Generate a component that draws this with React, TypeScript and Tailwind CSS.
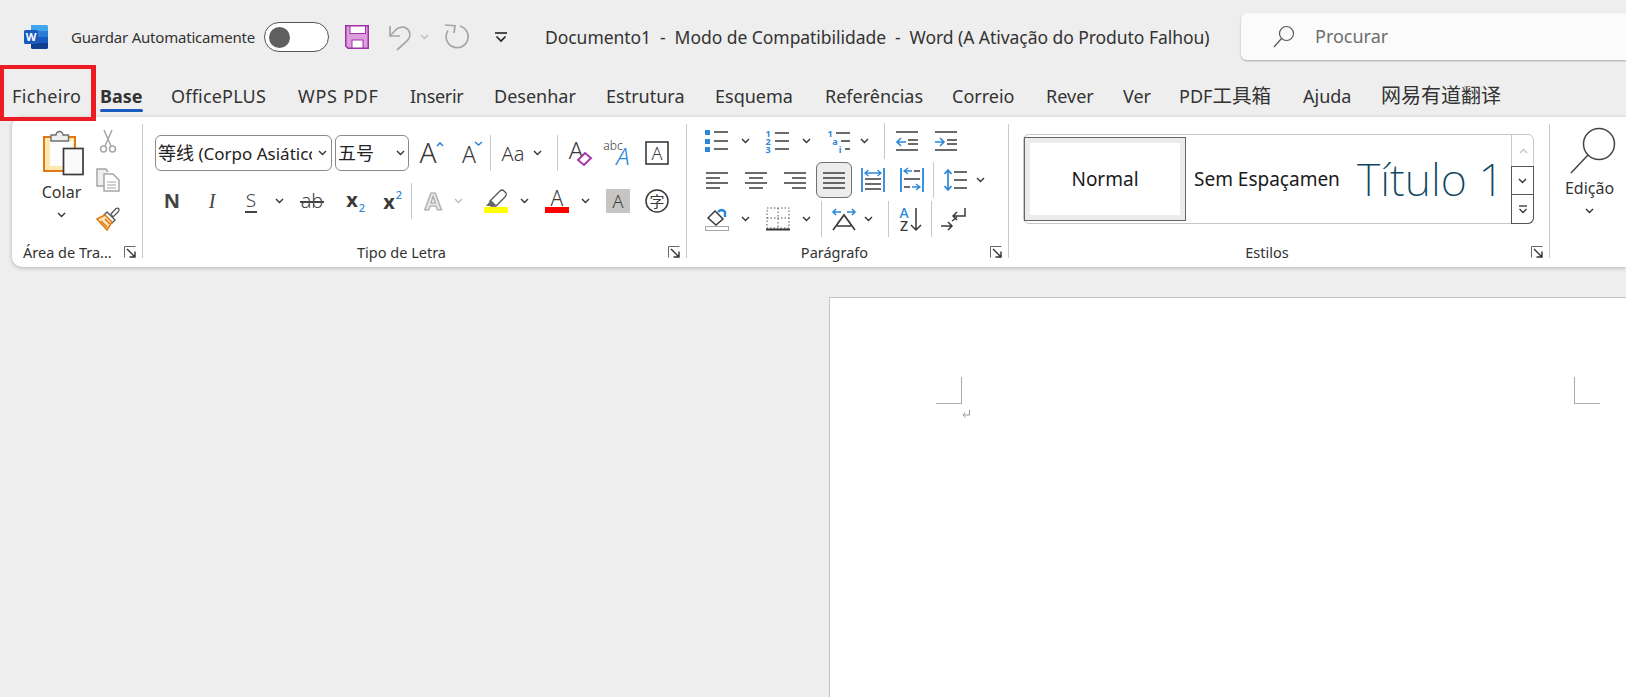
import React from "react";

const FONT = "font-['Noto_Sans','Open_Sans','Noto_Sans_CJK_SC',sans-serif]";
const D = "#3a3a3a";
const B = "#2b88d8";
const G = "#a6a6a6";

type P = { className?: string };

const Svg = ({ w = 24, h = 24, className = "", children }: { w?: number; h?: number; className?: string; children: React.ReactNode }) => (
  <svg width={w} height={h} viewBox={`0 0 ${w} ${h}`} fill="none" className={`shrink-0 block overflow-visible ${className}`}>
    {children}
  </svg>
);

const Chev = ({ className = "", c = "#333" }: P & { c?: string }) => (
  <Svg w={9} h={6} className={className}>
    <path d="M1 1 L4.5 4.5 L8 1" stroke={c} strokeWidth="1.4" />
  </Svg>
);

const Sep = ({ className = "" }: P) => <div className={`w-px h-[36px] bg-[#c8c8c8] shrink-0 ${className}`} />;

const Launcher = () => (
  <Svg w={12} h={12} className="mr-[6px] mt-[4px]">
    <path d="M0.5 11.5 V0.5 H11.5" stroke="#666" strokeWidth="1" />
    <path d="M3 3 L11 11 M5.5 11 H11 V5.5" stroke="#333" strokeWidth="1.4" />
  </Svg>
);

const Lines = ({ rows }: { rows: [number, number, number][] }) => (
  <>
    {rows.map(([x1, x2, y], i) => (
      <path key={i} d={`M${x1} ${y}H${x2}`} stroke={D} strokeWidth="1.5" />
    ))}
  </>
);

const GText = ({ x, y, s, fill = D, children, weight = 300 }: { x: number; y: number; s: number; fill?: string; children: React.ReactNode; weight?: number }) => (
  <text x={x} y={y} fontSize={s} fill={fill} fontWeight={weight} textAnchor="middle" fontFamily="'Noto Sans','Open Sans',sans-serif">
    {children}
  </text>
);

const Tab = ({ className, children, active }: { className: string; children: React.ReactNode; active?: boolean }) => (
  <div className={`relative whitespace-nowrap shrink-0 ${className} ${active ? "font-bold" : ""}`}>
    {children}
    {active && <div className="absolute left-0 right-0 top-[26px] h-[3px] bg-[#185abd] rounded-sm" />}
  </div>
);

export default function App() {
  return (
    <div className={`relative w-[1626px] h-[697px] overflow-hidden bg-[#eeeeee] text-[#333333] ${FONT}`}>
      {/* title bar */}
      <div className="h-[74px] flex items-center">
        <Svg w={24} h={24} className="ml-[24px]">
          <path d="M7 0H22.5A1.5 1.5 0 0 1 24 1.5V6H7Z" fill="#41a5ee" />
          <rect x="7" y="6" width="17" height="6" fill="#2b7cd3" />
          <rect x="7" y="12" width="17" height="6" fill="#185abd" />
          <path d="M7 18H24V22.5A1.5 1.5 0 0 1 22.5 24H8.5A1.5 1.5 0 0 1 7 22.5Z" fill="#103f91" />
          <rect x="0" y="5" width="14" height="14" rx="1.5" fill="#185abd" />
          <text x="7" y="16" textAnchor="middle" fontSize="11" fontWeight="700" fill="#fff" fontFamily="'Noto Sans',sans-serif">W</text>
        </Svg>
        <div className="ml-[23px] w-[187px] text-[15px] tracking-[-0.2px] whitespace-nowrap">Guardar Automaticamente</div>
        <div className="ml-[6px] w-[65px] h-[30px] rounded-full border border-[#555] bg-white flex items-center pl-[4px] shrink-0">
          <div className="w-[21px] h-[21px] rounded-full bg-[#5f5f5f]" />
        </div>
        <Svg w={24} h={24} className="ml-[16px]">
          <path d="M0.75 0.75H23.25V23.25H3L0.75 21Z" fill="#dc9fdc" stroke="#a030a8" strokeWidth="1.5" />
          <rect x="5" y="1" width="15.5" height="7.5" fill="#fff" stroke="#a030a8" strokeWidth="1" />
          <rect x="7" y="15" width="11" height="8" fill="#fff" stroke="#a030a8" strokeWidth="1" />
        </Svg>
        <Svg w={22} h={25} className="ml-[20px]">
          <path d="M1 1V11H11" stroke={G} strokeWidth="1.7" />
          <path d="M1.5 10.5 L7 4.5 C11 1 17 1 20 6 C22 10 20 14 18 16 L8 25" stroke={G} strokeWidth="1.7" />
        </Svg>
        <Chev className="ml-[9px]" c="#bdbdbd" />
        <Svg w={26} h={26} className="ml-[15px]">
          <path d="M1 1 L11 1.7 L10 9" stroke={G} strokeWidth="1.7" />
          <path d="M16 2 A11 11 0 1 1 4 6.5" stroke={G} strokeWidth="1.7" />
        </Svg>
        <Svg w={12} h={11} className="ml-[25px]">
          <path d="M0 1H12" stroke="#222" strokeWidth="1.6" />
          <path d="M1.5 4.5 L6 9 L10.5 4.5" stroke="#222" strokeWidth="1.6" />
        </Svg>
        <div className="ml-[38px] w-[663px] shrink-0 text-[17.5px] tracking-[-0.05px] whitespace-pre">Documento1  -  Modo de Compatibilidade  -  Word (A Ativação do Produto Falhou)</div>
        <div className="ml-[33px] flex-1 h-[47px] mt-[-1px] rounded-l-[6px] bg-[#fbfbfb] shadow-[0_1px_2px_rgba(0,0,0,0.3)] flex items-center">
          <Svg w={22} h={24} className="ml-[32px]">
            <circle cx="13.5" cy="8.5" r="7" stroke="#555" strokeWidth="1.2" />
            <path d="M8.5 13.5 L1 22" stroke="#555" strokeWidth="1.2" />
          </Svg>
          <div className="ml-[20px] text-[18px] text-[#6e6e6e]">Procurar</div>
        </div>
      </div>

      {/* tabs */}
      <div className="h-[43px] flex items-start pt-[9px] text-[18px] leading-[26px] text-[#333333]">
        <Tab className="ml-[12px] w-[68px] tracking-[0.35px]">Ficheiro</Tab>
        <Tab className="ml-[20px] w-[43px]" active>Base</Tab>
        <Tab className="ml-[28px] w-[95px] tracking-[0.2px]">OfficePLUS</Tab>
        <Tab className="ml-[32px] w-[81px] tracking-[0.7px]">WPS PDF</Tab>
        <Tab className="ml-[31px] w-[53px] tracking-[-0.3px]">Inserir</Tab>
        <Tab className="ml-[31px] w-[81px]">Desenhar</Tab>
        <Tab className="ml-[31px] w-[78px]">Estrutura</Tab>
        <Tab className="ml-[31px] w-[78px]">Esquema</Tab>
        <Tab className="ml-[32px] w-[97px]">Referências</Tab>
        <Tab className="ml-[30px] w-[64px]">Correio</Tab>
        <Tab className="ml-[30px] w-[50px]">Rever</Tab>
        <Tab className="ml-[27px] w-[27px]">Ver</Tab>
        <Tab className="ml-[29px] w-[93px]">PDF<span className="text-[19.5px]">工具箱</span></Tab>
        <Tab className="ml-[31px] w-[50px]">Ajuda</Tab>
        <Tab className="ml-[28px] w-[120px] text-[20px]">网易有道翻译</Tab>
      </div>

      {/* ribbon */}
      <div className="ml-[12px] h-[150px] rounded-l-[10px] bg-white shadow-[0_1px_4px_rgba(0,0,0,0.25)] flex items-start pt-[7px]">
        {/* clipboard */}
        <div className="w-[131px] h-[134px] border-r border-[#c8c8c8] flex flex-col shrink-0">
          <div className="h-[118px] shrink-0 flex">
            <div className="ml-[27px] w-[45px] flex flex-col items-center">
              <Svg w={41} h={46} className="mt-[5px] self-end">
                <rect x="1" y="8" width="31" height="34" fill="#fde9b0" stroke="#e07b12" strokeWidth="2" />
                <rect x="7" y="12" width="23" height="25" fill="#fdfdfd" />
                <path d="M8 12V6H13A3.5 3.5 0 0 1 20 6H25.5V12Z" fill="#efefef" stroke="#707070" strokeWidth="1.4" />
                <rect x="20.5" y="19.5" width="19.5" height="26" fill="#fafafa" stroke={D} strokeWidth="1.7" />
              </Svg>
              <div className="mt-[6px] text-[16px] leading-[22px]">Colar</div>
              <Chev className="mt-[9px]" />
            </div>
            <div className="ml-[12px] flex flex-col gap-[15px] mt-[5px]">
              <Svg>
                <path d="M8 1 L15 17 M16 1 L9 17" stroke={G} strokeWidth="1.5" />
                <circle cx="7.5" cy="20" r="3" stroke={G} strokeWidth="1.5" />
                <circle cx="16.5" cy="20" r="3" stroke={G} strokeWidth="1.5" />
              </Svg>
              <Svg>
                <path d="M8 18H1V1H10L12 4" fill="#eee" stroke={G} strokeWidth="1.5" />
                <path d="M8 6H17L23 12V23H8Z" fill="#fff" stroke={G} strokeWidth="1.5" />
                <path d="M11 14H20M11 17H20M11 20H20" stroke={G} strokeWidth="1" />
              </Svg>
              <Svg>
                <path d="M15 7 L20 1.5 Q22 0.5 23 2 Q23.5 3.5 22 5 L17 10 Z" fill="#fff" stroke="#555" strokeWidth="1.3" />
                <path d="M11 5 L19 13 L16 16 L8 8Z" fill="#fff" stroke="#555" strokeWidth="1.3" />
                <path d="M9 8 L1 12 L11 23 L16 15 Z" fill="#fbe3bd" stroke="#e07b12" strokeWidth="1.6" />
                <path d="M5 14 L11 20 M9 12 L14 17" stroke="#e07b12" strokeWidth="1.6" />
              </Svg>
            </div>
          </div>
          <div className="h-[20px] shrink-0 flex">
            <div className="ml-[11px] flex-1 text-[14.5px] leading-[20px] whitespace-nowrap">Área de Tra...</div>
            <Launcher />
          </div>
        </div>

        {/* font */}
        <div className="w-[544px] h-[134px] border-r border-[#c8c8c8] flex flex-col shrink-0">
          <div className="h-[118px] shrink-0">
            <div className="flex items-center mt-[11px] h-[36px]">
              <div className="ml-[12px] w-[177px] h-[36px] rounded-[6px] border border-[#8a8a8a] flex items-center pl-[2px] shrink-0">
                <div className="w-[154px] overflow-hidden whitespace-nowrap text-[17px] text-[#222]"><span className="text-[18px]">等线</span> (Corpo Asiático)</div>
                <Chev className="ml-[6px]" />
              </div>
              <div className="ml-[3px] w-[74px] h-[36px] rounded-[6px] border border-[#8a8a8a] flex items-center pl-[2px] shrink-0">
                <div className="w-[58px] whitespace-nowrap text-[18px] text-[#222]">五号</div>
                <Chev />
              </div>
              <Svg className="ml-[10px]">
                <GText x={9} y={22} s={28}>A</GText>
                <path d="M18 5 L21 2 L24 5" stroke={B} strokeWidth="1.6" />
              </Svg>
              <Svg w={21} className="ml-[18px]">
                <GText x={8} y={22} s={23}>A</GText>
                <path d="M14 1 L17.5 4 L21 1" stroke={B} strokeWidth="1.6" />
              </Svg>
              <Sep className="ml-[8px]" />
              <Svg className="ml-[10px]">
                <GText x={12} y={20} s={20}>Aa</GText>
              </Svg>
              <Chev className="ml-[8px]" />
              <Sep className="ml-[15px]" />
              <Svg className="ml-[9px]">
                <GText x={9} y={18} s={24}>A</GText>
                <path d="M11 19 L18 12 L24 17 L17 24 Z" fill="#fff" stroke="#a33aa8" strokeWidth="2" />
              </Svg>
              <Svg w={25} className="ml-[14px]">
                <GText x={8} y={9} s={12}>abc</GText>
                <text x={18} y={24} fontSize={24} fill={B} fontStyle="italic" fontWeight={300} textAnchor="middle" fontFamily="'Noto Sans',sans-serif">A</text>
              </Svg>
              <Svg className="ml-[15px]">
                <rect x="1" y="1" width="22" height="22" stroke={D} strokeWidth="1.6" />
                <GText x={12} y={19} s={18}>A</GText>
              </Svg>
            </div>
            <div className="flex items-center mt-[12px] h-[36px]">
              <div className="ml-[17px] w-[24px] text-center text-[20px] font-bold text-[#444] shrink-0 leading-[24px]">N</div>
              <div className="ml-[16px] w-[24px] text-center text-[20px] italic text-[#444] shrink-0 leading-[24px] font-['Liberation_Serif',serif]">I</div>
              <div className="ml-[15px] w-[24px] flex flex-col items-center shrink-0">
                <div className="text-[19px] font-light text-[#444] leading-[22px]">S</div>
                <div className="w-[12px] h-[1.5px] bg-[#444]" />
              </div>
              <Chev className="ml-[12px]" />
              <div className="relative ml-[16px] w-[24px] text-center text-[20px] font-light text-[#444] shrink-0 leading-[24px]">
                ab
                <div className="absolute left-0 right-0 top-[12px] h-[1.5px] bg-[#444]" />
              </div>
              <Svg className="ml-[19px]">
                <GText x={9} y={18} s={20} weight={700}>x</GText>
                <GText x={19} y={23} s={11} fill={B} weight={500}>2</GText>
              </Svg>
              <Svg className="ml-[13px]">
                <GText x={9} y={20} s={20} weight={700}>x</GText>
                <GText x={19} y={10} s={11} fill={B} weight={500}>2</GText>
              </Svg>
              <Sep className="ml-[7px]" />
              <Svg className="ml-[9px]">
                <text x={12} y={21} fontSize={24} fontWeight={700} fill="#e8e8e8" stroke="#aaaaaa" strokeWidth="1.2" textAnchor="middle" fontFamily="'Noto Sans',sans-serif">A</text>
              </Svg>
              <Chev className="ml-[9px]" c="#bdbdbd" />
              <Svg className="ml-[21px]">
                <path d="M6 12 L16 2 Q18 0 20 2 L22 4 Q23 6 21 8 L12 17 H7 Z" fill="#fff" stroke="#555" strokeWidth="1.3" />
                <path d="M2 17 L7 11 L12 16 L10 17Z" fill="#666" />
                <rect x="0" y="18" width="24" height="6" fill="#ffff00" />
              </Svg>
              <Chev className="ml-[12px]" />
              <Svg className="ml-[16px]">
                <GText x={12} y={17} s={21}>A</GText>
                <rect x="0" y="18" width="24" height="6" fill="#ff0000" />
              </Svg>
              <Chev className="ml-[12px]" />
              <Svg className="ml-[16px]">
                <rect width="24" height="24" fill="#c6c5c3" />
                <GText x={12} y={19} s={18}>A</GText>
              </Svg>
              <Svg className="ml-[15px]">
                <circle cx="12" cy="12" r="11" stroke={D} strokeWidth="1.5" />
                <text x={12} y={18} fontSize={15} fill={D} textAnchor="middle" fontFamily="'Noto Sans CJK SC',sans-serif">字</text>
              </Svg>
            </div>
          </div>
          <div className="h-[20px] shrink-0 flex">
            <div className="flex-1 pr-[8px] text-center text-[14.5px] leading-[20px]">Tipo de Letra</div>
            <Launcher />
          </div>
        </div>

        {/* paragraph */}
        <div className="w-[322px] h-[134px] border-r border-[#c8c8c8] flex flex-col shrink-0">
          <div className="h-[118px] shrink-0 mt-[-1px] mb-[1px] flex flex-col gap-[3px]">
            <div className="flex items-center h-[36px]">
              <Svg className="ml-[18px]">
                {[3, 12, 20].map((y) => <rect key={y} x="0" y={y - 2} width="5" height="5" fill={B} />)}
                <Lines rows={[[9, 23, 3], [9, 23, 12], [9, 23, 20]]} />
              </Svg>
              <Chev className="ml-[12px]" />
              <Svg className="ml-[15px]">
                <text x={3} y={8} fontSize={9} fontWeight={700} fill={B} textAnchor="middle">1</text>
                <text x={3} y={16} fontSize={9} fontWeight={700} fill={B} textAnchor="middle">2</text>
                <text x={3} y={24} fontSize={9} fontWeight={700} fill={B} textAnchor="middle">3</text>
                <Lines rows={[[10, 24, 4], [10, 24, 12], [10, 24, 20]]} />
              </Svg>
              <Chev className="ml-[13px]" />
              <Svg className="ml-[16px]">
                <text x={3} y={8} fontSize={9} fontWeight={700} fill={B} textAnchor="middle">1</text>
                <text x={8} y={16} fontSize={9} fontWeight={700} fill={B} textAnchor="middle">a</text>
                <text x={13} y={24} fontSize={9} fontWeight={700} fill={B} textAnchor="middle">i</text>
                <Lines rows={[[9, 23, 4], [14, 23, 12], [18, 23, 20]]} />
              </Svg>
              <Chev className="ml-[9px]" />
              <Sep className="ml-[15px]" />
              <Svg className="ml-[10px]">
                <Lines rows={[[1, 23, 3], [13, 23, 11], [13, 23, 15], [1, 23, 21]]} />
                <path d="M11 13H2 M6 9 L2 13 L6 17" stroke={B} strokeWidth="1.6" />
              </Svg>
              <Svg className="ml-[15px]">
                <Lines rows={[[1, 23, 3], [13, 23, 11], [13, 23, 15], [1, 23, 21]]} />
                <path d="M1 13H10 M6 9 L10 13 L6 17" stroke={B} strokeWidth="1.6" />
              </Svg>
            </div>
            <div className="flex items-center h-[36px]">
              <Svg className="ml-[18px]">
                <Lines rows={[[1, 23, 5], [1, 15, 10], [1, 23, 15], [1, 15, 20]]} />
              </Svg>
              <Svg className="ml-[15px]">
                <Lines rows={[[1, 23, 5], [5, 19, 10], [1, 23, 15], [5, 19, 20]]} />
              </Svg>
              <Svg className="ml-[15px]">
                <Lines rows={[[1, 23, 5], [9, 23, 10], [1, 23, 15], [9, 23, 20]]} />
              </Svg>
              <div className="ml-[9px] w-[36px] h-[36px] rounded-[6px] bg-[#ececec] border border-[#707070] flex items-center justify-center shrink-0">
                <Svg>
                  <Lines rows={[[1, 23, 5], [1, 23, 10], [1, 23, 15], [1, 23, 20]]} />
                </Svg>
              </div>
              <Svg className="ml-[9px]">
                <path d="M1 0V24 M23 0V24" stroke={B} strokeWidth="1.8" />
                <path d="M4 5H20 M7.5 2 L4 5 L7.5 8 M16.5 2 L20 5 L16.5 8" stroke={B} strokeWidth="1.3" />
                <Lines rows={[[4, 20, 11], [4, 20, 16], [4, 20, 21]]} />
              </Svg>
              <Svg className="ml-[15px]">
                <path d="M1 0V24 M23 0V24" stroke={B} strokeWidth="1.8" />
                <path d="M5 3H12 M8 0 L4 3 L8 6 M12 19H19 M16 16 L20 19 L16 22" stroke={B} strokeWidth="1.3" />
                <Lines rows={[[14, 20, 3], [4, 20, 11], [4, 10, 19]]} />
              </Svg>
              <Sep className="ml-[9px]" />
              <Svg className="ml-[9px]">
                <path d="M5 2V22 M1.5 6 L5 2 L8.5 6 M1.5 18 L5 22 L8.5 18" stroke={B} strokeWidth="1.7" />
                <Lines rows={[[11, 24, 4], [11, 24, 12], [11, 24, 20]]} />
              </Svg>
              <Chev className="ml-[9px]" />
            </div>
            <div className="flex items-center h-[36px]">
              <Svg className="ml-[18px]">
                <path d="M3 11 L10 4 L18 12 L11 18 Z" fill="#fff" stroke={D} strokeWidth="1.5" />
                <path d="M13 5 Q17 1 20 5 L20 10" stroke={B} strokeWidth="2.4" />
                <rect x="0.5" y="19.5" width="23" height="4" fill="#fff" stroke={G} />
              </Svg>
              <Chev className="ml-[12px]" />
              <Svg className="ml-[16px]">
                <rect x="1" y="1" width="22" height="20" stroke="#555" strokeDasharray="1.5 2" />
                <path d="M12 1V21 M1 11H23" stroke="#555" strokeDasharray="1.5 2" />
                <path d="M0 22.5H24" stroke="#333" strokeWidth="2" />
              </Svg>
              <Chev className="ml-[12px]" />
              <Sep className="ml-[10px]" />
              <Svg className="ml-[10px]">
                <path d="M1 5H9 M4 2 L1 5 L4 8 M15 5H23 M20 2 L23 5 L20 8" stroke={B} strokeWidth="1.5" />
                <path d="M1 23 L12 8 L23 23 M5 19H19" stroke={D} strokeWidth="1.7" />
              </Svg>
              <Chev className="ml-[8px]" />
              <Sep className="ml-[15px]" />
              <Svg className="ml-[9px]">
                <GText x={6} y={11} s={14} fill={B} weight={500}>A</GText>
                <GText x={6} y={24} s={14} weight={500}>Z</GText>
                <path d="M18 1V23 M13 18 L18 23 L23 18" stroke={D} strokeWidth="1.5" />
              </Svg>
              <Sep className="ml-[9px]" />
              <Svg className="ml-[9px]">
                <path d="M0 19H11 M7 15 L11 19 L7 23 M24 1V9H12 M16 5 L12 9 L16 13" stroke={D} strokeWidth="1.5" />
                <path d="M11 14 L16 10" stroke={D} strokeWidth="1.5" />
              </Svg>
            </div>
          </div>
          <div className="h-[20px] shrink-0 flex">
            <div className="flex-1 pr-[8px] text-center text-[14.5px] leading-[20px]">Parágrafo</div>
            <Launcher />
          </div>
        </div>

        {/* styles */}
        <div className="w-[541px] h-[134px] border-r border-[#c8c8c8] flex flex-col shrink-0">
          <div className="h-[118px] shrink-0">
            <div className="ml-[14px] mt-[10px] w-[511px] h-[90px] rounded-[6px] border border-[#c8c8c8] flex items-start">
              <div className="mt-[2px] w-[162px] h-[84px] border border-[#666] shrink-0">
                <div className="w-full h-full border-[5px] border-[#ececec] flex items-center justify-center text-[19px] text-[#1a1a1a]">Normal</div>
              </div>
              <div className="ml-[8px] w-[145px] h-[84px] mt-[2px] overflow-hidden whitespace-nowrap flex items-center text-[19px] text-[#1a1a1a] shrink-0">Sem Espaçamento</div>
              <div className="ml-[18px] w-[145px] h-[84px] mt-[2px] whitespace-nowrap flex items-center text-[45px] font-extralight text-[#0f4761] shrink-0">Título 1</div>
              <div className="ml-[9px] w-[23px] h-[89px] shrink-0 flex flex-col">
                <div className="h-[31px] border-l border-[#c8c8c8] flex items-center justify-center"><Svg w={9} h={6}><path d="M1 5 L4.5 1.5 L8 5" stroke="#c4c4c4" strokeWidth="1.4" /></Svg></div>
                <div className="h-[29px] border border-[#555] flex items-center justify-center"><Chev /></div>
                <div className="h-[29px] border-x border-b border-[#555] rounded-br-[6px] flex items-center justify-center">
                  <Svg w={10} h={9}><path d="M1 1H9" stroke="#333" strokeWidth="1.3" /><path d="M1.5 4 L5 7.5 L8.5 4" stroke="#333" strokeWidth="1.3" /></Svg>
                </div>
              </div>
            </div>
          </div>
          <div className="h-[20px] shrink-0 flex">
            <div className="flex-1 pr-[6px] text-center text-[14.5px] leading-[20px]">Estilos</div>
            <Launcher />
          </div>
        </div>

        {/* edit */}
        <div className="w-[76px] shrink-0 flex flex-col items-center">
          <Svg w={46} h={47} className="mt-[3px] ml-[9px]">
            <circle cx="29" cy="17" r="15.5" stroke="#444" strokeWidth="1.5" />
            <path d="M18 28 L1 46" stroke="#444" strokeWidth="1.5" />
          </Svg>
          <div className="mt-[3px] ml-[3px] text-[16px] leading-[22px]">Edição</div>
          <Chev className="mt-[9px] ml-[3px]" />
        </div>
      </div>

      {/* page */}
      <div className="relative ml-[829px] mt-[30px] h-[400px] bg-white border-l border-t border-[#c4c4c4]">
        <div className="absolute left-[106px] top-[79px] w-[26px] h-[27px] border-r border-b border-[#ababab]" />
        <div className="absolute left-[744px] top-[79px] w-[26px] h-[27px] border-l border-b border-[#ababab]" />
        <Svg w={9} h={9} className="absolute left-[132px] top-[112px]">
          <path d="M7.5 0V5H1 M3.5 2.5 L1 5 L3.5 7.5" stroke="#999" strokeWidth="1" />
        </Svg>
      </div>

      {/* red annotation */}
      <div className="absolute left-0 top-[65px] w-[96px] h-[56px] border-4 border-r-[5px] border-[#ed1c24]" />
    </div>
  );
}
